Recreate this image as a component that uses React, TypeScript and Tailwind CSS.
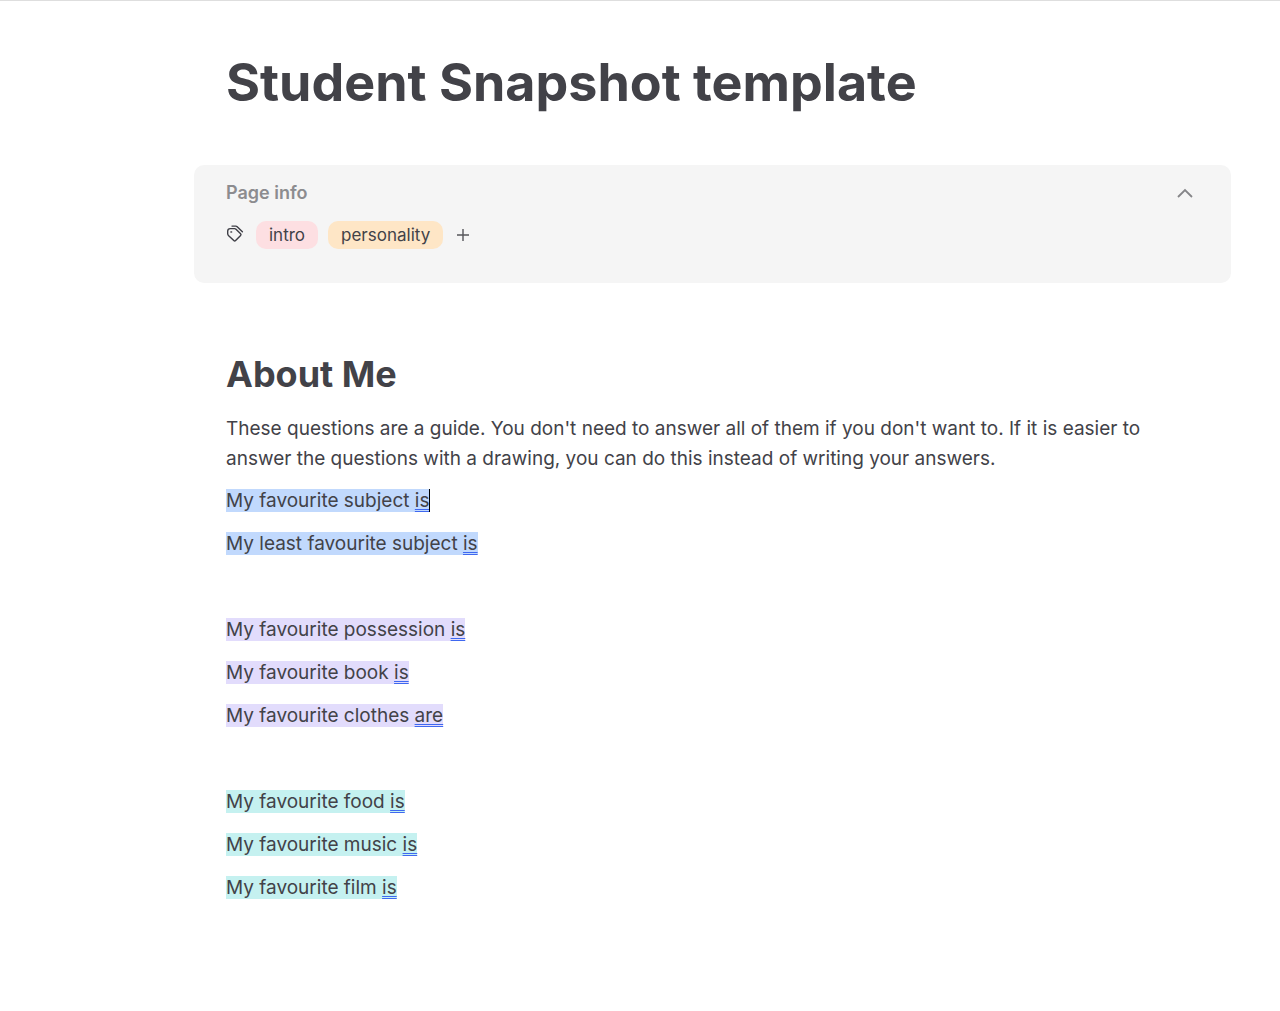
import React from 'react';

interface Prompt {
  text: string;
  ending: string;
  caret?: boolean;
}

interface PromptGroup {
  name: string;
  highlight: string;
  prompts: Prompt[];
}

const groups: PromptGroup[] = [
  {
    name: 'subjects',
    highlight: 'bg-[#c1d9fd]',
    prompts: [
      { text: 'My favourite subject', ending: 'is', caret: true },
      { text: 'My least favourite subject', ending: 'is' },
    ],
  },
  {
    name: 'things',
    highlight: 'bg-[#e2dcfc]',
    prompts: [
      { text: 'My favourite possession', ending: 'is' },
      { text: 'My favourite book', ending: 'is' },
      { text: 'My favourite clothes', ending: 'are' },
    ],
  },
  {
    name: 'leisure',
    highlight: 'bg-[#c5f1f0]',
    prompts: [
      { text: 'My favourite food', ending: 'is' },
      { text: 'My favourite music', ending: 'is' },
      { text: 'My favourite film', ending: 'is' },
    ],
  },
];

function TagIcon() {
  return (
    <svg width="18" height="20" viewBox="0 0 18 20" fill="none" stroke="#3f3f46" strokeWidth="1.4" strokeLinejoin="round" strokeLinecap="round" aria-hidden="true">
      <path d="M4.2 3.6H8.6Q9.4 3.6 10 4.2L14.6 8.8Q15.4 9.6 14.6 10.4L9.6 15.6Q8.7 16.5 7.8 15.6L2.4 10.4Q1.7 9.7 1.7 8.8V6Q1.8 3.7 4.2 3.6Z" />
      <path d="M6 1.1H9.8Q10.6 1.1 11.2 1.7L16.4 6.7" />
      <circle cx="5.3" cy="7" r="0.3" />
    </svg>
  );
}

function PageInfo() {
  const [open, setOpen] = React.useState(true);

  return (
    <section className="ml-[194px] mr-[49px] mt-[50px] rounded-[10px] bg-[#f5f5f5] px-8 pt-4 pb-[34px]">
      <div className="flex h-6 items-center justify-between">
        <h2 className="text-lg font-semibold text-[#8c8c8f]">Page info</h2>
        <button type="button" aria-label="Toggle page info" aria-expanded={open} onClick={() => setOpen(!open)} className="mr-[5px]">
          <svg width="18" height="18" viewBox="0 0 18 18" fill="none" stroke="#858588" strokeWidth="1.8" aria-hidden="true">
            <path d="M2 13 9 6l7 7" />
          </svg>
        </button>
      </div>
      {open && (
        <div className="mt-4 flex h-7 items-center text-[17px] leading-7">
          <TagIcon />
          <span className="ml-3 rounded-[10px] bg-[#fddfe2] px-[13px]">intro</span>
          <span className="ml-2.5 rounded-[10px] bg-[#fee6c6] px-[13px]">personality</span>
          <button type="button" aria-label="Add tag" className="ml-3">
            <svg width="16" height="16" viewBox="0 0 16 16" stroke="#55555a" strokeWidth="1.4" aria-hidden="true">
              <path d="M8 2v12M2 8h12" />
            </svg>
          </button>
        </div>
      )}
    </section>
  );
}

export default function App() {
  return (
    <main className="border-t border-[#dedede] bg-white font-['Inter',sans-serif] text-[#424248]">
      <h1 className="ml-[226px] mt-[50px] text-[52px] leading-[64px] font-bold">Student Snapshot template</h1>
      <PageInfo />
      <article className="ml-[226px] mr-[100px] mt-[67px] text-[19px] leading-[30px]">
        <h2 className="text-[36px] leading-[48px] font-bold">About Me</h2>
        <p className="mt-4">
          These questions are a guide. You don't need to answer all of them if you don't want to. If it is easier to
          answer the questions with a drawing, you can do this instead of writing your answers.
        </p>
        <div className="mt-3 flex flex-col gap-14">
          {groups.map((group) => (
            <div key={group.name} className="flex flex-col gap-[13px]">
              {group.prompts.map((prompt) => (
                <p key={prompt.text}>
                  <span className={group.highlight}>
                    {prompt.text}{' '}
                    <span className="underline decoration-[#3f68f0] decoration-double decoration-1 underline-offset-2">{prompt.ending}</span>
                  </span>
                  {prompt.caret && <span className="border-l border-black" />}
                </p>
              ))}
            </div>
          ))}
        </div>
      </article>
    </main>
  );
}
